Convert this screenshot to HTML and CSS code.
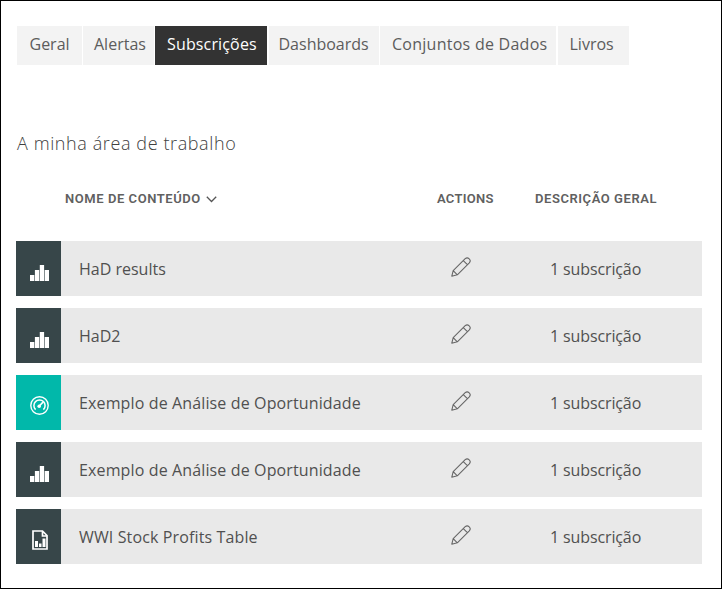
FILE: index.html
```html
<!DOCTYPE html>
<html lang="pt">
<head>
<meta charset="utf-8">
<title>Subscrições</title>
<link rel="stylesheet" href="styles.css">
</head>
<body>
<svg class="defs" width="0" height="0">
  <symbol id="bars" viewBox="0 0 19 16"><path d="M0 10h4.300v6H0zM4.900 5h4.300v11H4.900zM9.800 0h4.300v16H9.800zM14.700 5H19v11h-4.300z" fill="#fff"/></symbol>
  <symbol id="gauge" viewBox="0 0 19 19"><g fill="none" stroke="#fff"><circle cx="9.5" cy="9.5" r="8.7" stroke-width="1.4"/><path d="M5.600 13.600a5.600 5.600 0 1 1 7.800 0" stroke-width="1.5"/><path d="M9.300 10 13 6.200" stroke-width="1.7"/></g><circle cx="9.2" cy="10.2" r="1.8" fill="#fff"/></symbol>
  <symbol id="report" viewBox="0 0 16 20"><path d="M1 1h9.500L15 5.500V19H1zM10.500 1v5H15" fill="none" stroke="#fff" stroke-width="1.7"/><path d="M3 11h3v6H3zM7 13.500h2.500V17H7zM10.500 8.500h3V17h-3z" fill="#fff"/></symbol>
  <symbol id="pencil" viewBox="0 0 20 20"><path d="M.8 19.200 2.200 13.700 14.200 1.700q2-1.800 4 .1t.1 4L6.300 17.800zM2.200 13.700l4.100 4.100M12.300 3.600l4.100 4.100" fill="none" stroke="#666" stroke-width="1.1" stroke-linejoin="round"/></symbol>
</svg>
<main class="page">
  <nav class="tabs">
    <a class="tab geral">Geral</a>
    <a class="tab alertas">Alertas</a>
    <a class="tab subs active">Subscrições</a>
    <a class="tab dash">Dashboards</a>
    <a class="tab dados">Conjuntos de Dados</a>
    <a class="tab livros">Livros</a>
  </nav>
  <h1 class="title">A minha área de trabalho</h1>
  <div class="grid head">
    <span class="sort"><span>NOME DE CONTEÚDO</span><svg class="chevron" width="11" height="7" viewBox="0 0 11 7"><path d="M.8.800 5.500 5.500 10.200.8" fill="none" stroke="#555" stroke-width="1.3"/></svg></span>
    <span class="actions">ACTIONS</span>
    <span>DESCRIÇÃO GERAL</span>
  </div>
  <section class="rows">
    <div class="grid row"><span class="tile"><svg width="19" height="16"><use href="#bars"/></svg></span><span class="name">HaD results</span><svg class="edit" width="20" height="20"><use href="#pencil"/></svg><span class="count">1 subscrição</span></div>
    <div class="grid row"><span class="tile"><svg width="19" height="16"><use href="#bars"/></svg></span><span class="name">HaD2</span><svg class="edit" width="20" height="20"><use href="#pencil"/></svg><span class="count">1 subscrição</span></div>
    <div class="grid row"><span class="tile teal"><svg width="19" height="19"><use href="#gauge"/></svg></span><span class="name long">Exemplo de Análise de Oportunidade</span><svg class="edit" width="20" height="20"><use href="#pencil"/></svg><span class="count">1 subscrição</span></div>
    <div class="grid row"><span class="tile"><svg width="19" height="16"><use href="#bars"/></svg></span><span class="name long">Exemplo de Análise de Oportunidade</span><svg class="edit" width="20" height="20"><use href="#pencil"/></svg><span class="count">1 subscrição</span></div>
    <div class="grid row"><span class="tile doc"><svg width="16" height="20"><use href="#report"/></svg></span><span class="name long">WWI Stock Profits Table</span><svg class="edit" width="20" height="20"><use href="#pencil"/></svg><span class="count">1 subscrição</span></div>
  </section>
</main>
</body>
</html>
```
FILE: styles.css
```css
* { box-sizing: border-box; }
body { margin: 0; font-family: "Open Sans", "Noto Sans", sans-serif; color: #505050; background: #fff; }
.defs { position: absolute; }
.page { width: 722px; height: 589px; border: 1px solid #000; padding: 25px 19.500px 0 15px; overflow: hidden; }
.tabs { display: flex; gap: 1.500px; margin-left: 1px; height: 38.500px; }
.tab { background: #f3f3f3; font-size: 16px; line-height: 37px; padding-left: 12px; color: #5c5c5c; white-space: nowrap; }
.geral { width: 64.500px; padding-left: 12.500px; }
.alertas { width: 70.500px; padding-left: 11px; }
.subs { width: 112px; letter-spacing: .15px; }
.dash { width: 110px; padding-left: 10px; }
.dados { width: 176px; letter-spacing: .26px; }
.livros { width: 71.500px; }
.active { background: #333; color: #fff; }
.title { margin: 63.500px 0 0 1px; font-size: 18px; line-height: 30px; font-weight: 300; letter-spacing: .6px; color: #404040; }
.grid { display: grid; align-items: center; }
.head { grid-template-columns: 372px 98px 1fr; padding-left: 49px; margin-top: 30px; height: 22px; font: 600 13px/22px Roboto, sans-serif; letter-spacing: .56px; color: #606060; }
.actions { letter-spacing: .3px; }
.sort { display: flex; align-items: center; gap: 5px; }
.rows { display: grid; gap: 12px; margin-top: 30.500px; }
.row { grid-template-columns: 45px 390px 99px 1fr; height: 55.100px; background: #e9e9e9; font-size: 16px; }
.tile { align-self: stretch; display: flex; align-items: center; justify-content: center; padding: 10px 0 0 2px; background: #374649; }
.teal { background: #01b8aa; padding-top: 6px; }
.doc { padding-top: 7px; }
.tile svg { display: block; }
.name { padding: 1px 0 0 18px; }
.long { letter-spacing: .13px; }
.edit { margin-bottom: 3px; }
.count { padding-top: 1px; white-space: nowrap; letter-spacing: -.12px; }
```
